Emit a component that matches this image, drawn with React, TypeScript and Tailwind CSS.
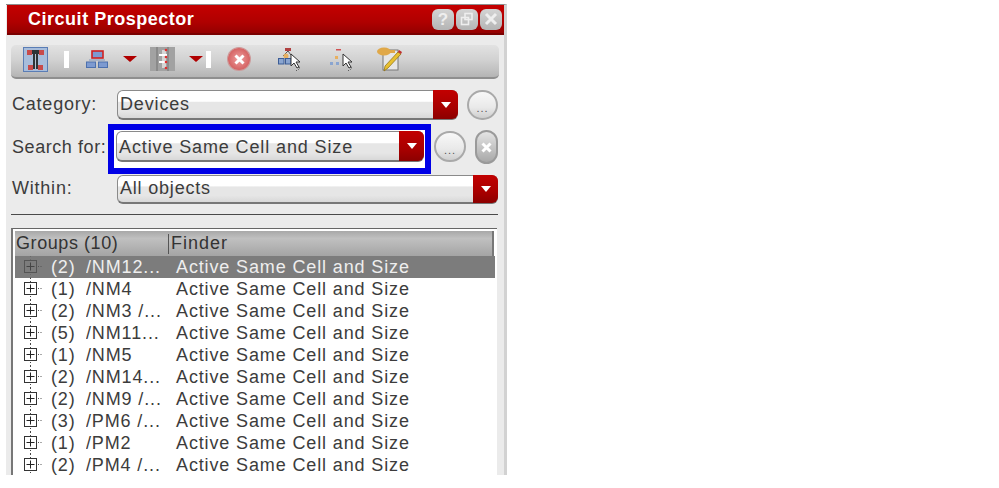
import React from "react";

const Arrow = ({ size = 10 }: { size?: number }) => (
  <svg width={size} height={size * 0.6} viewBox="0 0 10 6"><path d="M0 0H10L5 6Z" fill="#fff" /></svg>
);

const Combo = ({ text, className, textClass }: { text: string; className: string; textClass: string }) => (
  <div className={`flex items-stretch rounded-[6px] border border-[#8a8a8a] border-b-2 border-b-[#777] bg-[linear-gradient(#fff_0%,#fff_38%,#e6e6e6_42%,#e6e6e6_75%,#d8d8d8_100%)] ${className}`}>
    <span className={`flex-1 pl-[2px] text-[18px] text-[#3c3c3c] ${textClass}`}>{text}</span>
    <span className="-my-px -mr-px flex w-[25px] items-center justify-center rounded-r-[6px] bg-[linear-gradient(#c20000,#a80000_60%,#8c0000)]"><Arrow /></span>
  </div>
);

const Dots = ({ className }: { className: string }) => (
  <div className={`flex items-end justify-center rounded-full border-2 border-[#a9a9a9] bg-[linear-gradient(#f8f8f8,#e9e9e9_60%,#cfcfcf)] pb-[6px] text-[11px] leading-[8px] tracking-[1px] text-[#555] ${className}`}>...</div>
);

const Sep = () => <div className="h-[17px] w-[5px] bg-white" />;
const Down = () => (
  <svg width="14" height="6" viewBox="0 0 14 6"><path d="M0 0H14L7 6Z" fill="#b00000" /></svg>
);

const WinBtn = ({ children }: { children: React.ReactNode }) => (
  <div className="flex h-[21px] w-[22px] items-center justify-center rounded-[6px] bg-[linear-gradient(#d4d4d4,#b4b4b4)] text-[#eeeeee]">{children}</div>
);

const Cursor = () => (
  <>
    <path d="M13 7V19L16 16L19 21L21 20L18 15H22Z" fill="#fff" stroke="#333" strokeWidth="1" />
    <path d="M20 19l2 2-2 2M18 23l1 1" stroke="#333" strokeWidth="1" strokeDasharray="1 1" fill="none" />
  </>
);

const rows: [string, string][] = [
  ["(2)", "/NM12..."],
  ["(1)", "/NM4"],
  ["(2)", "/NM3 /..."],
  ["(5)", "/NM11..."],
  ["(1)", "/NM5"],
  ["(2)", "/NM14..."],
  ["(2)", "/NM9 /..."],
  ["(3)", "/PM6 /..."],
  ["(1)", "/PM2"],
  ["(2)", "/PM4 /..."],
];

export default function App() {
  return (
    <div className="h-[488px] w-[999px] overflow-hidden bg-white font-['Liberation_Sans',sans-serif]">
      <div className="ml-[6px] mt-[4px] flex h-[471px] w-[501px] flex-col overflow-hidden border-r-[3px] border-t border-r-[#d2d2d2] border-t-[#8d8d8d] bg-[#ebebeb] pl-px">
        {/* title bar */}
        <div className="flex h-[30px] shrink-0 items-center justify-between border-b-2 border-b-[#7a0000] bg-[linear-gradient(#c40000,#b00000_60%,#940000)] pl-[21px] pr-[2px]">
          <span className="text-[18px] font-bold leading-[26px] tracking-[0.52px] text-white">Circuit Prospector</span>
          <div className="flex gap-[2px]">
            <WinBtn><span className="text-[17px] font-bold leading-none">?</span></WinBtn>
            <WinBtn>
              <svg width="14" height="14" viewBox="0 0 14 14" fill="none" stroke="#eee" strokeWidth="1.6"><rect x="5" y="1.5" width="7" height="6" /><rect x="1.5" y="5.5" width="7" height="7" /></svg>
            </WinBtn>
            <WinBtn>
              <svg width="14" height="14" viewBox="0 0 14 14" stroke="#eee" strokeWidth="3"><path d="M2 2L12 12M12 2L2 12" /></svg>
            </WinBtn>
          </div>
        </div>

        <div className="flex shrink-0 flex-col pl-[4px] pr-[5px]">
          {/* toolbar */}
          <div className="mt-[10px] flex h-[34px] w-[488px] items-center rounded-[5px] border-b-2 border-b-[#8f8f8f] bg-[linear-gradient(#e2e2e2,#d2d2d2_45%,#c0c0c0_80%,#b4b4b4)] pb-[4px] pl-[12px]">
            <svg width="25" height="25" viewBox="0 0 25 25">
              <rect x="0.5" y="0.5" width="24" height="24" fill="#a8bddb" stroke="#5a7db5" />
              <path d="M5 3H20V7H15V22H10V7H5Z" fill="#2f3438" />
              <path d="M12 7H13V22H12Z" fill="#b8c4d4" />
              <path d="M4 3H9V8H4ZM16 3H21V8H16Z" fill="#c84a4a" />
              <path d="M5 18H10V23H5ZM15 18H20V23H15Z" fill="#c84a4a" />
            </svg>
            <div className="ml-[16px]"><Sep /></div>
            <svg className="ml-[17px]" width="22" height="18" viewBox="0 0 22 18">
              <rect x="6" y="1" width="11" height="7" fill="#7d9ad0" stroke="#d02020" strokeWidth="1.6" />
              <path d="M3 10H19" stroke="#8095bb" />
              <rect x="0.5" y="12" width="9" height="5.5" fill="#7d9ad0" stroke="#4c70ad" />
              <rect x="12.5" y="12" width="9" height="5.5" fill="#7d9ad0" stroke="#4c70ad" />
            </svg>
            <div className="ml-[15px]"><Down /></div>
            <svg className="ml-[13px]" width="25" height="24" viewBox="0 0 25 24">
              <rect width="25" height="24" fill="#a2a2a2" />
              <path d="M6 0H8V24H6ZM17 0H19V24H17Z" fill="#8a8a8a" />
              <path d="M12 3H16V21H12Z" fill="#d6d6d6" />
              <path d="M9 8H17M9 15H17" stroke="#fff" strokeWidth="2" />
              <circle cx="16" cy="3" r="1.3" fill="#e03030" /><circle cx="16" cy="10" r="1.3" fill="#e03030" /><circle cx="16" cy="15" r="1.3" fill="#e03030" /><circle cx="16" cy="21" r="1.3" fill="#e03030" />
            </svg>
            <div className="ml-[14px]"><Down /></div>
            <div className="ml-[3px]"><Sep /></div>
            <div className="ml-[17px] flex h-[22px] w-[22px] items-center justify-center rounded-full bg-[radial-gradient(#f0a0a0,#c84848)] ring-1 ring-[#cc9999]">
              <svg width="11" height="11" viewBox="0 0 11 11" stroke="#fff" strokeWidth="3"><path d="M1.5 1.5L9.5 9.5M9.5 1.5L1.5 9.5" /></svg>
            </div>
            <svg className="ml-[28px]" width="24" height="25" viewBox="0 0 24 25" fill="none">
              <path d="M7 1H13V4H7Z" fill="#b04040" />
              <path d="M10 4L5 9M10 4L13 8" stroke="#555" />
              <circle cx="8" cy="9" r="2.5" fill="#e8b060" />
              <rect x="0.5" y="11.5" width="5.5" height="5.5" fill="#8aa5d0" stroke="#3b5c96" />
              <rect x="7.5" y="11.5" width="5.5" height="5.5" fill="#8aa5d0" stroke="#3b5c96" />
              <Cursor />
            </svg>
            <svg className="ml-[28px]" width="24" height="25" viewBox="0 0 24 25" fill="none">
              <path d="M6 2H11V3.5H6Z" fill="#d05050" />
              <rect x="5" y="9" width="3" height="3" fill="#e8b060" />
              <rect x="0" y="15" width="3" height="3" fill="#8aa5d0" />
              <rect x="6" y="15" width="3" height="3" fill="#8aa5d0" />
              <Cursor />
            </svg>
            <svg className="ml-[23px]" width="26" height="25" viewBox="0 0 26 25" fill="none">
              <rect x="6" y="3" width="15" height="20" fill="#e6e6e6" stroke="#777" />
              <path d="M24 7L11 21L7 24L8 19L21 5Z" fill="#e8c030" stroke="#8a6a10" strokeWidth="0.7" />
              <path d="M21 5L24 7L25 5L22 3Z" fill="#c03030" />
              <ellipse cx="7" cy="4.5" rx="7" ry="4" fill="#e0a848" />
              <path d="M12 4.5H18" stroke="#e0a848" strokeWidth="3" />
            </svg>
          </div>

          {/* category */}
          <div className="mt-[11px] flex h-[30px] items-center">
            <span className="w-[106px] pl-[1px] pb-[2px] text-[18px] tracking-[0.78px] text-[#3c3c3c]">Category:</span>
            <Combo text="Devices" textClass="leading-[26px] tracking-[0.85px]" className="h-[30px] w-[341px]" />
            <Dots className="-mt-[1px] ml-[9px] h-[30px] w-[31px]" />
          </div>

          {/* search */}
          <div className="mt-[4px] flex h-[50px] items-start">
            <span className="mt-[10px] w-[97px] whitespace-nowrap pl-[1px] text-[18px] leading-[26px] tracking-[0.57px] text-[#3c3c3c]">Search for:</span>
            <div className="flex h-[50px] w-[323px] items-start justify-center border-[6px] border-[#0000e6] bg-white pl-[1px] pt-[1px]">
              <Combo text="Active Same Cell and Size" textClass="leading-[30px] tracking-[0.88px]" className="h-[31px] w-[308px]" />
            </div>
            <Dots className="ml-[3px] mt-[7px] h-[31px] w-[32px]" />
            <div className="ml-[9px] mt-[6px] flex h-[34px] w-[23px] items-center justify-center rounded-full border-2 border-[#9a9a9a] bg-[linear-gradient(#e4e4e4,#a8a8a8)]">
              <svg width="11" height="11" viewBox="0 0 11 11" stroke="#fff" strokeWidth="3"><path d="M1.5 1.5L9.5 9.5M9.5 1.5L1.5 9.5" /></svg>
            </div>
          </div>

          {/* within */}
          <div className="mt-[1px] flex h-[29px] items-center">
            <span className="w-[106px] pl-[1px] pb-[2px] text-[18px] tracking-[0.78px] text-[#3c3c3c]">Within:</span>
            <Combo text="All objects" textClass="leading-[24px] tracking-[0.8px]" className="h-[29px] w-[381px]" />
          </div>

          <div className="mt-[10px] h-px w-[487px] bg-[#4a4a4a]" />
        </div>

        {/* table */}
        <div className="ml-[4px] mt-[13px] min-h-0 w-[486px] flex-1 overflow-hidden border-l-2 border-t border-l-[#777] border-t-[#666] bg-white pl-[2px] pt-[2px]">
          <div className="flex h-[25px] w-[479px] items-center border-r-2 border-r-[#777] bg-[linear-gradient(#a8a8a8,#c0c0c0_30%,#b0b0b0_70%,#a4a4a4)] text-[18px] text-[#333]">
            <span className="w-[153px] pl-[1px] tracking-[0.57px]">Groups (10)</span>
            <span className="h-[20px] w-px bg-[#555]" />
            <span className="pl-[2px] tracking-[1px]">Finder</span>
          </div>
          <div className="flex flex-col">
            {rows.map(([count, name], i) => {
              const sel = i === 0;
              return (
                <div key={i} className={`flex h-[22px] w-[480px] items-center whitespace-nowrap text-[18px] leading-[22px] tracking-[0.87px] ${sel ? "bg-[#7c7c7c] text-[#eeeeee]" : "text-[#3c3c3c]"}`}>
                  <svg className="ml-[8px] shrink-0" width="20" height="22" viewBox="0 0 20 22" fill="none">
                    <path d="M7.5 0V4M7.5 18V22" stroke={sel ? "#6a6a6a" : "#444"} strokeDasharray="1 2" />
                    <rect x="1.5" y="4.5" width="12" height="12" stroke={sel ? "#555" : "#333"} />
                    <path d="M3.5 10.5H11.5M7.5 6.5V14.5" stroke={sel ? "#444" : "#222"} />
                    <path d="M15 10.5H19" stroke="#555" strokeDasharray="1 1.5" />
                  </svg>
                  <span className="ml-[8px] w-[35px]">{count}</span>
                  <span className="w-[90px] overflow-hidden">{name}</span>
                  <span>Active Same Cell and Size</span>
                </div>
              );
            })}
          </div>
        </div>
      </div>
    </div>
  );
}
